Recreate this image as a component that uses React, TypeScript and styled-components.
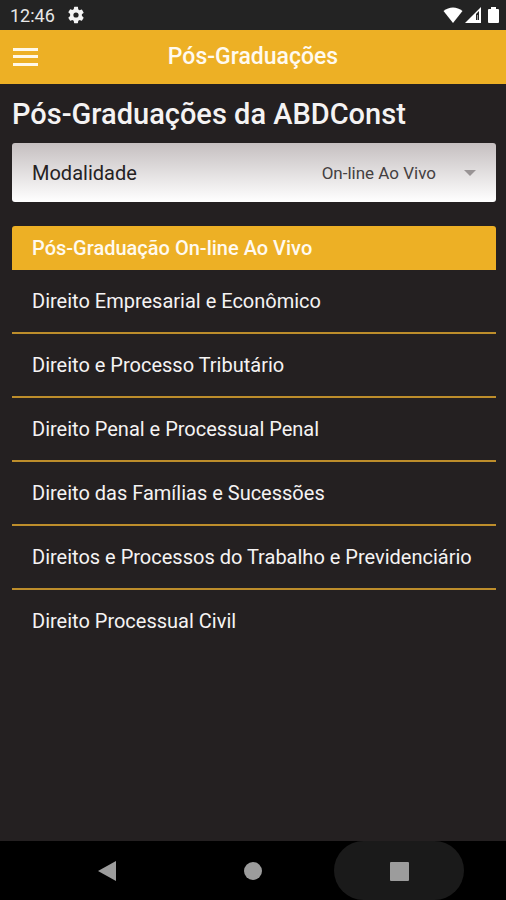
import React, { useState } from "react";
import styled, { createGlobalStyle } from "styled-components";

const gold = "#edb025";
const ink = "#242021";

const GlobalStyle = createGlobalStyle`
  *, *::before, *::after { box-sizing: border-box; }
  body { margin: 0; background: ${ink}; font-family: Roboto, "Liberation Sans", sans-serif; }
  button, select { font: inherit; }
`;

const Screen = styled.div`
  display: flex;
  flex-direction: column;
  min-height: 100vh;
  color: #f5f3f3;
  background: ${ink};
`;

const StatusBar = styled.div`
  display: flex;
  align-items: center;
  justify-content: space-between;
  height: 30px;
  padding: 0 4px 0 10px;
  background: #232323;
`;

const StatusGroup = styled.div<{ $gap: number }>`
  display: flex;
  align-items: center;
  gap: ${({ $gap }) => $gap}px;
`;

const Clock = styled.time`
  font-size: 18px;
  line-height: 20px;
  padding-top: 2px;
  color: #e8e8e8;
`;

const AppBar = styled.header`
  display: grid;
  grid-template-columns: 48px 1fr 48px;
  align-items: center;
  height: 54px;
  background: ${gold};
`;

const MenuButton = styled.button`
  display: flex;
  align-items: center;
  height: 48px;
  padding: 0 0 0 12px;
  border: 0;
  color: #fff8e8;
  background: transparent;
  cursor: pointer;
`;

const BarTitle = styled.div`
  font-size: 23px;
  font-weight: 500;
  line-height: 28px;
  text-align: center;
  color: #fffaf0;
`;

const Content = styled.main`
  flex: 1;
  padding: 12px 10px 24px 12px;
`;

const Heading = styled.h1`
  margin: 0 0 11px;
  font-size: 29px;
  font-weight: 500;
  line-height: 36px;
`;

const Field = styled.div`
  display: flex;
  align-items: center;
  height: 59px;
  margin-bottom: 24px;
  padding: 0 20px;
  border-radius: 3px;
  color: #252223;
  background: linear-gradient(#c5bfc0, #ffffff);
`;

const FieldLabel = styled.label`
  font-size: 20px;
  line-height: 24px;
`;

const SelectBox = styled.div`
  display: flex;
  flex: 1;
  align-items: center;
`;

const Select = styled.select`
  flex: 1;
  height: 40px;
  margin-right: -12px;
  padding: 0 40px 0 0;
  border: 0;
  appearance: none;
  font-size: 17px;
  text-align-last: right;
  color: #444041;
  background: transparent;
`;

const Caret = styled.svg`
  pointer-events: none;
`;

const CourseHeading = styled.h2`
  margin: 0;
  padding: 10px 20px;
  border-radius: 3px 3px 0 0;
  font-size: 20px;
  font-weight: 500;
  line-height: 24px;
  color: #fffaf0;
  background: ${gold};
`;

const CourseList = styled.ul`
  margin: 0;
  padding: 0;
  list-style: none;
`;

const CourseItem = styled.li`
  border-bottom: 2px solid #bd8d2b;
  &:last-child { border-bottom: 0; }
`;

const CourseLink = styled.a`
  display: block;
  padding: 19px 20px;
  font-size: 20px;
  line-height: 24px;
  color: inherit;
  text-decoration: none;
`;

const NavBar = styled.nav`
  display: flex;
  justify-content: center;
  gap: 16px;
  height: 59px;
  background: #000;
`;

const NavButton = styled.button<{ $pressed?: boolean }>`
  display: flex;
  align-items: center;
  justify-content: center;
  width: 130px;
  padding: 0;
  border: 0;
  border-radius: 30px;
  color: #9c9c9c;
  background: ${({ $pressed }) => ($pressed ? "#1a1a1a" : "transparent")};
`;

const courses = [
  "Direito Empresarial e Econômico",
  "Direito e Processo Tributário",
  "Direito Penal e Processual Penal",
  "Direito das Famílias e Sucessões",
  "Direitos e Processos do Trabalho e Previdenciário",
  "Direito Processual Civil",
];

const modes = ["On-line Ao Vivo"];

export default function App() {
  const [mode, setMode] = useState(modes[0]);

  return (
    <Screen>
      <GlobalStyle />
      <StatusBar>
        <StatusGroup $gap={12}>
          <Clock>12:46</Clock>
          <svg width="18" height="18" viewBox="1 1 22 22" fill="#f4f4f4" aria-hidden="true">
            <path d="M19.14 12.94c.04-.3.06-.61.06-.94s-.02-.64-.07-.94l2.03-1.58a.5.5 0 0 0 .12-.61l-1.92-3.32a.5.5 0 0 0-.59-.22l-2.39.96a7 7 0 0 0-1.62-.94l-.36-2.54A.5.5 0 0 0 13.92 2h-3.84a.5.5 0 0 0-.48.41l-.36 2.54a7 7 0 0 0-1.62.94l-2.39-.96a.5.5 0 0 0-.59.22L2.72 8.47a.5.5 0 0 0 .12.61l2.03 1.58a7 7 0 0 0 0 2.68l-2.03 1.58a.5.5 0 0 0-.12.61l1.92 3.32c.12.22.37.29.59.22l2.39-.96c.5.38 1.03.7 1.62.94l.36 2.54c.05.24.24.41.48.41h3.84c.24 0 .44-.17.48-.41l.36-2.54a7 7 0 0 0 1.62-.94l2.39.96c.22.08.47 0 .59-.22l1.92-3.32a.5.5 0 0 0-.12-.61zM12 15.2a3.2 3.2 0 1 1 0-6.4 3.2 3.2 0 0 1 0 6.4z" />
          </svg>
        </StatusGroup>
        <StatusGroup $gap={2}>
          <svg width="20" height="18" viewBox="0 0 20 18" fill="#fff" aria-hidden="true">
            <path d="M.5 5C6 .2 14 .2 19.500 5L10 17z" />
          </svg>
          <svg width="17" height="18" viewBox="0 0 17 18" aria-hidden="true">
            <path d="M0 17L16 1v16z" fill="#fff" />
            <path d="M11 8L14 5v9h-3z" fill="#232323" />
            <path d="M12 9h1v5h-1z" fill="#999" />
          </svg>
          <svg width="18" height="18" viewBox="0 0 18 18" fill="#fff" aria-hidden="true">
            <path d="M7 1h5v2h2q1 0 1 1v12q0 1-1 1H5q-1 0-1-1V4q0-1 1-1h2z" />
          </svg>
        </StatusGroup>
      </StatusBar>

      <AppBar>
        <MenuButton aria-label="Abrir menu">
          <svg width="26" height="20" viewBox="0 0 26 20" fill="currentColor" aria-hidden="true">
            <path d="M1 1h25v3H1zM1 8h25v3H1zM1 16h25v3H1z" />
          </svg>
        </MenuButton>
        <BarTitle>Pós-Graduações</BarTitle>
      </AppBar>

      <Content>
        <Heading>Pós-Graduações da ABDConst</Heading>
        <Field>
          <FieldLabel htmlFor="modalidade">Modalidade</FieldLabel>
          <SelectBox>
            <Select id="modalidade" value={mode} onChange={(e) => setMode(e.target.value)}>
              {modes.map((m) => (
                <option key={m}>{m}</option>
              ))}
            </Select>
            <Caret width="12" height="8" viewBox="0 0 12 8" fill="#999495" aria-hidden="true">
              <path d="M0 1h12L6 7z" />
            </Caret>
          </SelectBox>
        </Field>

        <CourseHeading>Pós-Graduação {mode}</CourseHeading>
        <CourseList>
          {courses.map((course) => (
            <CourseItem key={course}>
              <CourseLink href="#">{course}</CourseLink>
            </CourseItem>
          ))}
        </CourseList>
      </Content>

      <NavBar>
        <NavButton aria-label="Voltar">
          <svg width="20" height="22" viewBox="0 0 20 22" fill="currentColor" aria-hidden="true">
            <path d="M1 11L19 1v20z" />
          </svg>
        </NavButton>
        <NavButton aria-label="Início">
          <svg width="20" height="20" viewBox="0 0 20 20" fill="currentColor" aria-hidden="true">
            <circle cx="10" cy="10" r="9" />
          </svg>
        </NavButton>
        <NavButton aria-label="Recentes" $pressed>
          <svg width="20" height="20" viewBox="0 0 20 20" fill="currentColor" aria-hidden="true">
            <rect x="1" y="1" width="19" height="19" rx="1" />
          </svg>
        </NavButton>
      </NavBar>
    </Screen>
  );
}
